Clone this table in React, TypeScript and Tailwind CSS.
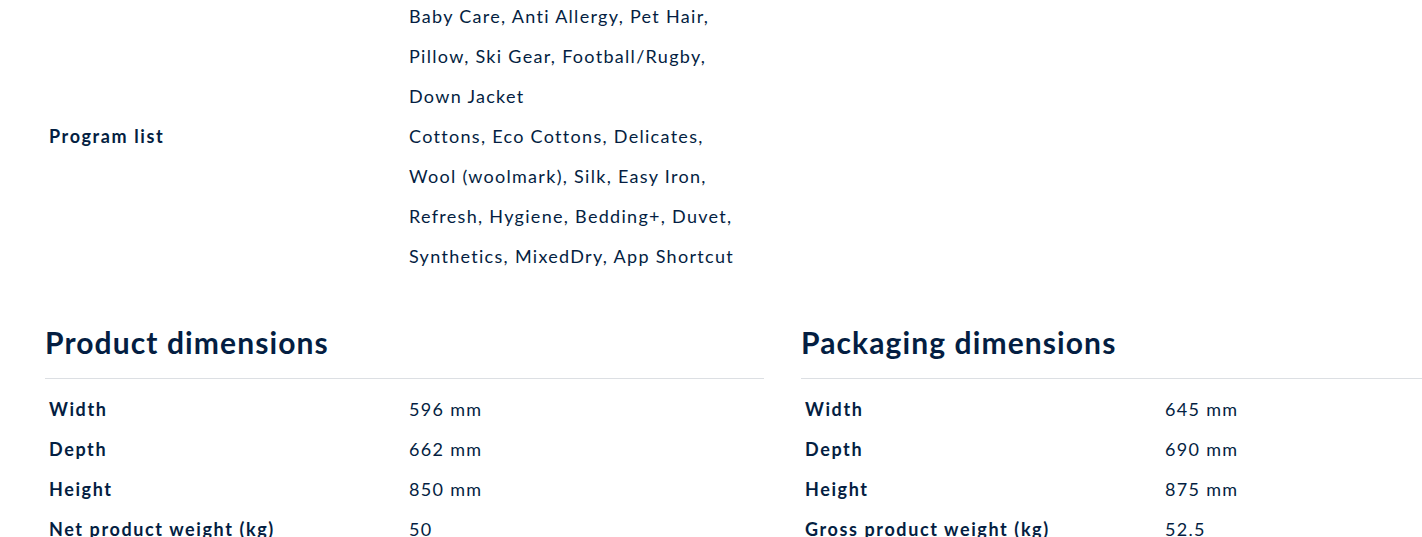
const NAVY = "text-[#041e42]";

const programTail = [
  "Baby Care, Anti Allergy, Pet Hair,",
  "Pillow, Ski Gear, Football/Rugby,",
  "Down Jacket",
];

const programList = [
  "Cottons, Eco Cottons, Delicates,",
  "Wool (woolmark), Silk, Easy Iron,",
  "Refresh, Hygiene, Bedding+, Duvet,",
  "Synthetics, MixedDry, App Shortcut",
];

const product = [
  ["Width", "596 mm"],
  ["Depth", "662 mm"],
  ["Height", "850 mm"],
  ["Net product weight (kg)", "50"],
];

const packaging = [
  ["Width", "645 mm"],
  ["Depth", "690 mm"],
  ["Height", "875 mm"],
  ["Gross product weight (kg)", "52.5"],
];

function SpecRow({ label, lines }: { label: string; lines: string[] }) {
  return (
    <div className="flex text-[18px] leading-[40px]">
      <div className="w-[364px] shrink-0 pl-1 font-bold tracking-[1.6px]">{label}</div>
      <div className="flex flex-col tracking-[1.3px]">
        {lines.map((l) => (
          <span key={l} className="whitespace-nowrap">
            {l}
          </span>
        ))}
      </div>
    </div>
  );
}

function Section({ title, rows }: { title: string; rows: string[][] }) {
  return (
    <section className="w-[719px] shrink-0">
      <h2 className="text-[30px] leading-[36px] font-bold tracking-[1.1px]">{title}</h2>
      <div className="mt-[18px] border-t border-[#dcdfe3] pt-[10px]">
        {rows.map(([k, v]) => (
          <SpecRow key={k} label={k} lines={[v]} />
        ))}
      </div>
    </section>
  );
}

export default function App() {
  return (
    <div
      className={`h-[537px] w-[1422px] overflow-hidden bg-white ${NAVY}`}
      style={{ fontFamily: "Lato, 'Open Sans', sans-serif" }}
    >
      <div className="-mt-[4px] pl-[45px]">
        <SpecRow label="" lines={programTail} />
        <SpecRow label="Program list" lines={programList} />
        <div className="mt-[48px] flex gap-[37px]">
          <Section title="Product dimensions" rows={product} />
          <Section title="Packaging dimensions" rows={packaging} />
        </div>
      </div>
    </div>
  );
}
